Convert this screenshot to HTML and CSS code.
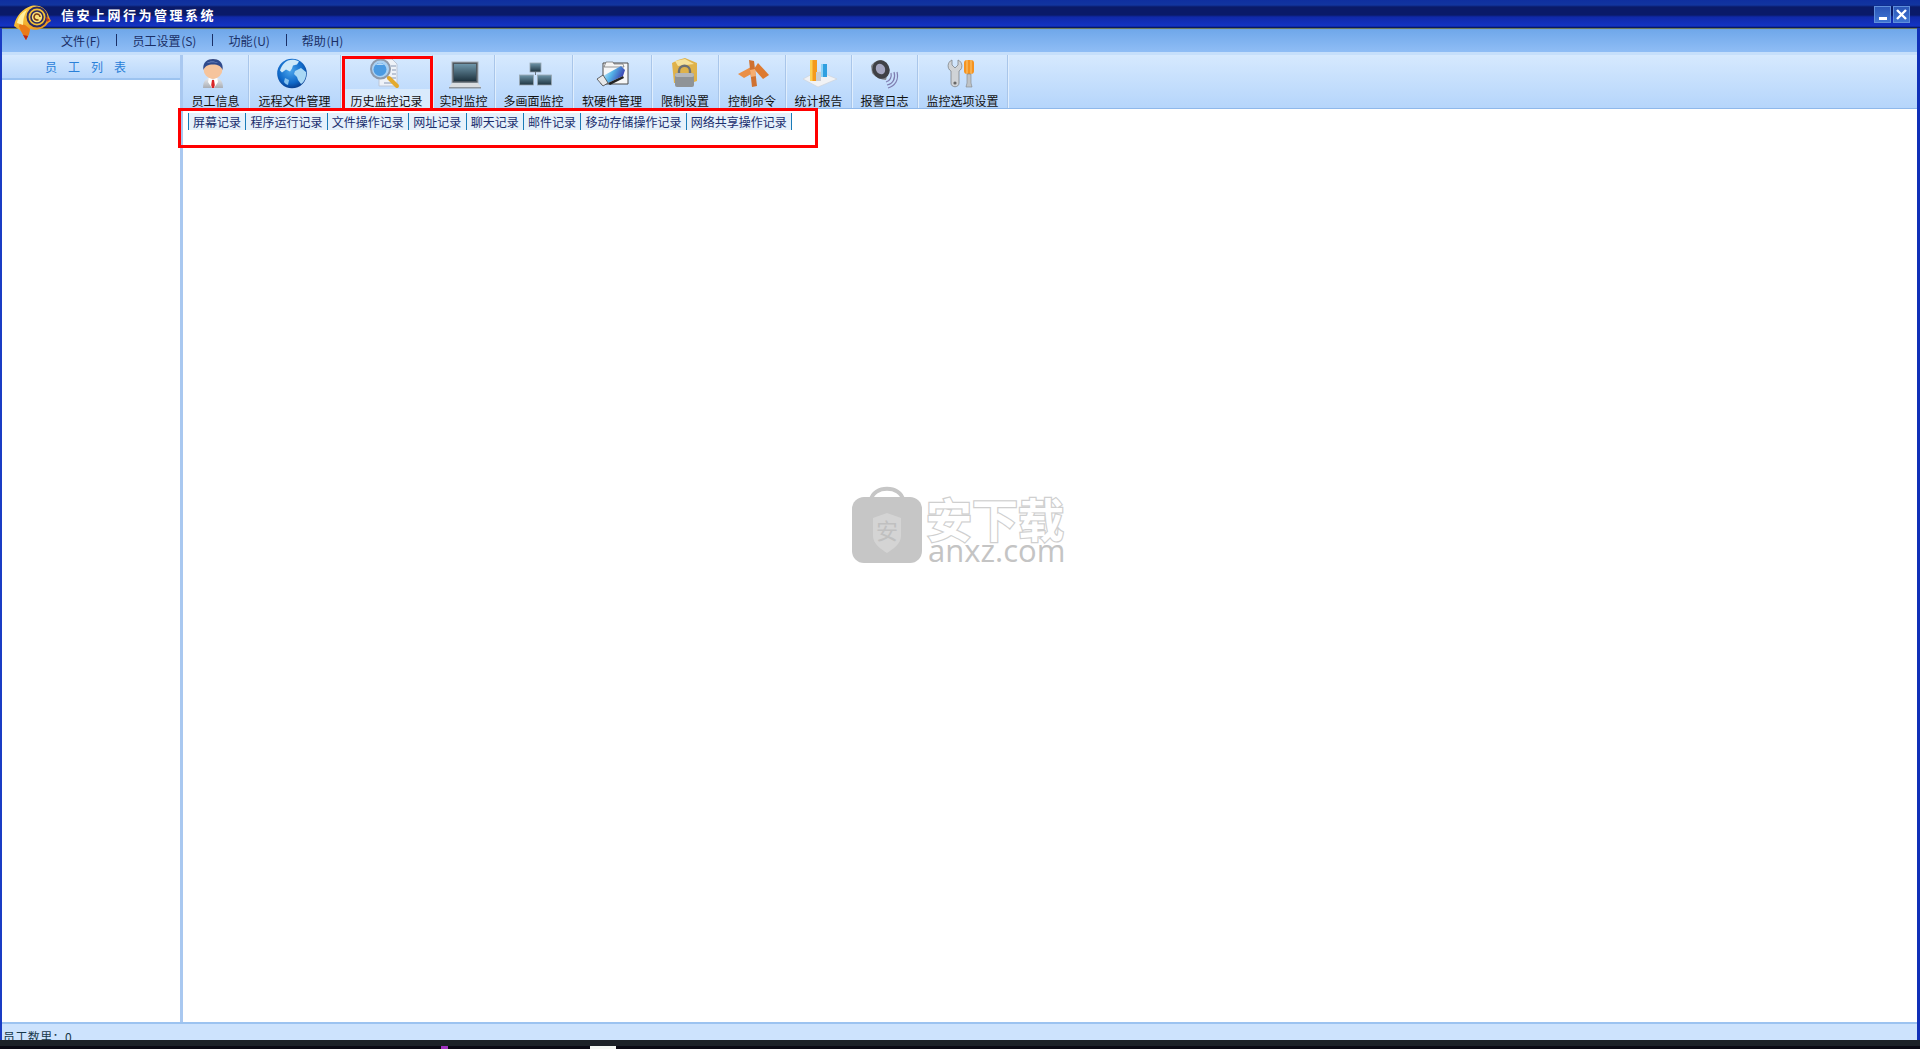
FILE: index.html
```html
<!DOCTYPE html>
<html lang="zh-CN">
    <head>
        <meta charset="UTF-8" />
        <title>信安上网行为管理系统</title>
        <link rel="stylesheet" href="styles.css">
    </head>
    <body>
        <header class="titlebar">
            <span class="app-title">信安上网行为管理系统</span>
            <div class="window-buttons">
                <button class="window-button"><span class="minimize-mark"></span></button>
                <button class="window-button">
                    <svg width="11" height="11" viewBox="0 0 11 11"><path d="M1 1l9 9M10 1l-9 9" stroke="#fff" stroke-width="2.4" fill="none"/></svg>
                </button>
            </div>
        </header>

        <svg class="app-logo" width="40" height="38" viewBox="0 0 40 38">
            <defs>
                <linearGradient id="logoGold" x1="0" y1="0" x2="0.6" y2="1">
                    <stop offset="0" stop-color="#ffd94e"/>
                    <stop offset="1" stop-color="#e58a14"/>
                </linearGradient>
            </defs>
            <path d="M2 22C4 11 11 5 19 2c9-2 16 3 18 11l2 4-3 2c-4 6-11 8-18 6l-1 5-3 6-5-9z" fill="url(#logoGold)"/>
            <path d="M8 20l5 1 5 4-1 5-3 6-5-9-2-5z" fill="#ea7a18"/>
            <path d="M11 31l3 5 2-4z" fill="#b8261a"/>
            <path d="M5 19C6 13 10 8 15 6c-3 5-4 10-4 15z" fill="#fff0a0"/>
            <circle cx="25" cy="13" r="9.500" fill="#f4c234" stroke="#2c2a62" stroke-width="2"/>
            <circle cx="25" cy="13" r="6" fill="#f9e07a" stroke="#2c2a62" stroke-width="1.600"/>
            <path d="M28 13a3 3 0 1 0-1.500 2.600" fill="none" stroke="#7a3a10" stroke-width="1.500"/>
            <path d="M34 13l4 3-3 2z" fill="#c8381a"/>
        </svg>

        <div class="frame">
            <nav class="menubar">
                <span class="menu-item">文件 (F)</span>
                <span class="menu-sep"></span>
                <span class="menu-item">员工设置 (S)</span>
                <span class="menu-sep"></span>
                <span class="menu-item">功能 (U)</span>
                <span class="menu-sep"></span>
                <span class="menu-item">帮助 (H)</span>
            </nav>

            <div class="workspace">
                <aside class="sidebar">
                    <div class="sidebar-head">员 工 列 表</div>
                </aside>

                <main class="content">
                    <div class="toolbar">
                        <div class="tool w-66">
                            <svg class="tool-icon" viewBox="0 0 36 34">
                                <defs>
                                    <linearGradient id="userCoat" x1="0" y1="0" x2="0" y2="1">
                                        <stop offset="0" stop-color="#eef0f3"/>
                                        <stop offset="1" stop-color="#a9adb4"/>
                                    </linearGradient>
                                </defs>
                                <path d="M5 31c0-7 3-11 10-11s10 4 10 11z" fill="url(#userCoat)"/>
                                <path d="M11 20l4 3 4-3 1 5-4 6h-2l-4-6z" fill="#fff"/>
                                <path d="M14 23h2l.800 5-.800 3h-2l-.800-3z" fill="#d8262a"/>
                                <ellipse cx="15" cy="12" rx="9.500" ry="10" fill="#f6c49c"/>
                                <path d="M5.500 13C4 5 10 2 15 2s11 3 9.500 11C23 9 20 7.500 15 7.500S7 9 5.500 13z" fill="#2f4a8c"/>
                                <path d="M9 6c2-2 8-2 11 0-3-1-8-1-11 0z" fill="#7d95cc"/>
                            </svg>
                            <span class="tool-label">员工信息</span>
                        </div>
                        <div class="tool w-92">
                            <svg class="tool-icon" viewBox="0 0 36 34">
                                <defs>
                                    <radialGradient id="globeFill" cx="0.45" cy="0.4" r="0.65">
                                        <stop offset="0" stop-color="#4ba6ec"/>
                                        <stop offset="0.65" stop-color="#0f68c8"/>
                                        <stop offset="1" stop-color="#063582"/>
                                    </radialGradient>
                                </defs>
                                <circle cx="15" cy="16.500" r="14.800" fill="url(#globeFill)"/>
                                <path d="M11 3.500c3-1 8-1 11 1l-2 3-4 1-1 3-2 3-4-2-4 3-2-2C4 10 7 5 11 3.500z" fill="#cfe9fa"/>
                                <path d="M18 14l6-3 5 4c.500 6-2 10-5 12l-3-4-1-3-3-3z" fill="#a9d8f5"/>
                                <path d="M8 21l4 2-1 5c-1.500-.500-3-1.500-4-3z" fill="#86c2ee"/>
                            </svg>
                            <span class="tool-label">远程文件管理</span>
                        </div>
                        <div class="tool w-92 tool-active">
                            <svg class="tool-icon" viewBox="0 0 36 34">
                                <path d="M10 2h13l5 5v22H10z" fill="#eef2f8" stroke="#bcc6d6"/>
                                <path d="M22 9h5M23 13h4M23 17h4M22 21h5M15 26h12" stroke="#aab6ca" stroke-width="1.400"/>
                                <circle cx="11.500" cy="12" r="9.500" fill="#a9d1f4" stroke="#8d99ab" stroke-width="2"/>
                                <circle cx="11" cy="12.500" r="6.500" fill="#4a9ae2"/>
                                <path d="M7 8c2-2 6-2 8 0-2-.500-6-.500-8 0z" fill="#e0f0fc"/>
                                <path d="M18.500 20l9.500 9.500" stroke="#8d7a3a" stroke-width="1.800"/>
                                <path d="M20 21l8 8" stroke="#e3aa2e" stroke-width="4" stroke-linecap="round"/>
                            </svg>
                            <span class="tool-label">历史监控记录</span>
                        </div>
                        <div class="tool w-62">
                            <svg class="tool-icon" viewBox="0 0 36 34">
                                <defs>
                                    <linearGradient id="screenFill" x1="0" y1="0" x2="0" y2="1">
                                        <stop offset="0" stop-color="#6f96aa"/>
                                        <stop offset="1" stop-color="#1f3440"/>
                                    </linearGradient>
                                </defs>
                                <rect x="6" y="5" width="26" height="21" fill="#4e5860" stroke="#a5acb3"/>
                                <rect x="8" y="7" width="22" height="17" fill="url(#screenFill)"/>
                                <path d="M6 26h26l3 4H3z" fill="#dadde0"/>
                                <path d="M3 30h32v1.500H3z" fill="#8d949b"/>
                            </svg>
                            <span class="tool-label">实时监控</span>
                        </div>
                        <div class="tool w-78">
                            <svg class="tool-icon" viewBox="0 0 36 34">
                                <rect x="14" y="6" width="11" height="9" fill="url(#screenFill)" stroke="#9ba8b2" stroke-width="0.800"/>
                                <rect x="3.500" y="18" width="14" height="10" fill="url(#screenFill)" stroke="#9ba8b2" stroke-width="0.800"/>
                                <rect x="21.500" y="18" width="14" height="10" fill="url(#screenFill)" stroke="#9ba8b2" stroke-width="0.800"/>
                                <path d="M19.500 15v3" stroke="#6a7680"/>
                            </svg>
                            <span class="tool-label">多画面监控</span>
                        </div>
                        <div class="tool w-79">
                            <svg class="tool-icon" viewBox="0 0 36 34">
                                <defs>
                                    <linearGradient id="usbFill" x1="0" y1="0" x2="1" y2="0.400">
                                        <stop offset="0" stop-color="#e8f4fc"/>
                                        <stop offset="0.5" stop-color="#55b4e8"/>
                                        <stop offset="1" stop-color="#3a3fb0"/>
                                    </linearGradient>
                                </defs>
                                <path d="M9 6h25v21H7l2-7z" fill="#f6f7f8" stroke="#4a4a4a"/>
                                <path d="M12 5h7l1 2h9l1 3H10z" fill="#f4f4f4" stroke="#555" stroke-width="0.600"/>
                                <path d="M9 19L27 9l4 4-2 6-15 7z" fill="url(#usbFill)"/>
                                <path d="M14 26l15-7 1 2-14 7z" fill="#222"/>
                                <path d="M3 22l6-4 5 8-5 3z" fill="#e6e8ea" stroke="#444" stroke-width="0.800"/>
                            </svg>
                            <span class="tool-label">软硬件管理</span>
                        </div>
                        <div class="tool w-67">
                            <svg class="tool-icon" viewBox="0 0 36 34">
                                <path d="M5 6l6-3 7-2 12 5v18l-6 2H7z" fill="#dfb24a"/>
                                <path d="M8 4l10-2 9 5-16 2z" fill="#f6e29c"/>
                                <path d="M12 17v-3c0-7 11-7 11 0v3" fill="none" stroke="#6c7074" stroke-width="2.400"/>
                                <rect x="8" y="16" width="19" height="14" rx="2" fill="#8f9396"/>
                                <rect x="8" y="16" width="19" height="4" rx="2" fill="#b4b7ba"/>
                            </svg>
                            <span class="tool-label">限制设置</span>
                        </div>
                        <div class="tool w-67">
                            <svg class="tool-icon" viewBox="0 0 36 34">
                                <path d="M4 17l13-7 2 6-9 5z" fill="#ea8f46"/>
                                <path d="M35 18L24 6l-4 6 9 10z" fill="#dd7a30"/>
                                <path d="M15 3l5 1 3 25-5 1z" fill="#cf7130"/>
                                <path d="M16 13l5-1 1 7-5 1z" fill="#f5ad70"/>
                            </svg>
                            <span class="tool-label">控制命令</span>
                        </div>
                        <div class="tool w-66">
                            <svg class="tool-icon" viewBox="2 0 36 34">
                                <path d="M4 22l15-8 19 8-19 8z" fill="#f1f2f5" stroke="#cfd3da" stroke-width="0.700"/>
                                <path d="M11 3h7v21h-7z" fill="#f59a1c"/>
                                <path d="M11 3h2.500v21H11z" fill="#fcd050"/>
                                <path d="M22 7h6v13h-6z" fill="#2f9fe0"/>
                                <path d="M22 7h2v13h-2z" fill="#8dd3f7"/>
                                <path d="M17 15h5v9h-5z" fill="#c8ccd4"/>
                            </svg>
                            <span class="tool-label">统计报告</span>
                        </div>
                        <div class="tool w-66">
                            <svg class="tool-icon" viewBox="0 0 36 34">
                                <path d="M4 9c2-4 7-6 11-6 5 6 6 14 4 20-5 0-11-3-14-7z" fill="#85898f"/>
                                <ellipse cx="14" cy="12.500" rx="8.500" ry="9.500" fill="#3f4146" transform="rotate(-25 14 12.500)"/>
                                <ellipse cx="13.500" cy="12" rx="4.500" ry="5.500" fill="#a4a6c0" transform="rotate(-25 13.500 12)"/>
                                <path d="M24 16c1 4-1 8-5 9M27 15c2 6-1 12-7 13M30 15c2 8-2 14-9 16" fill="none" stroke="#7f7db0" stroke-width="1.200"/>
                            </svg>
                            <span class="tool-label">报警日志</span>
                        </div>
                        <div class="tool w-90">
                            <svg class="tool-icon" viewBox="0 0 36 34">
                                <path d="M7 3v5l3 3 3-3V3c5 2 5 9 1 11v12c0 5-8 5-8 0V14C2 12 2 5 7 3z" fill="#d0d3d6" stroke="#7f8488" stroke-width="0.800"/>
                                <circle cx="10" cy="26" r="1.600" fill="#666"/>
                                <rect x="19" y="3" width="10" height="14" rx="3" fill="#f59320"/>
                                <path d="M22 3v14M26 3v14" stroke="#fbc069" stroke-width="1.200"/>
                                <path d="M22 17h4v9l1 4h-6l1-4z" fill="#bfc3c6" stroke="#7f8488" stroke-width="0.600"/>
                            </svg>
                            <span class="tool-label">监控选项设置</span>
                        </div>
                    </div>

                    <div class="subtabs">
                        <a class="subtab">屏幕记录</a>
                        <a class="subtab">程序运行记录</a>
                        <a class="subtab">文件操作记录</a>
                        <a class="subtab">网址记录</a>
                        <a class="subtab">聊天记录</a>
                        <a class="subtab">邮件记录</a>
                        <a class="subtab">移动存储操作记录</a>
                        <a class="subtab">网络共享操作记录</a>
                    </div>

                    <div class="watermark">
                        <svg width="70" height="80" viewBox="0 0 70 80">
                            <path d="M19 17C21 2 49 2 51 17" fill="none" stroke="#c6c6c6" stroke-width="4"/>
                            <rect x="0" y="14" width="70" height="66" rx="12" fill="#c6c6c6"/>
                            <path d="M21 35l14-5 14 5v18c0 8-8 13-14 17-6-4-14-9-14-17z" fill="#d4d4d4"/>
                            <text x="35" y="56" class="watermark-seal">安</text>
                        </svg>
                        <div class="watermark-text">
                            <span class="watermark-cn">安下载</span>
                            <span class="watermark-en">anxz.com</span>
                        </div>
                    </div>
                </main>
            </div>

            <footer class="statusbar">员工数里：0</footer>
        </div>

        <div class="taskbar">
            <div class="taskbar-strip">
                <span class="task-purple"></span>
                <span class="task-white"></span>
                <span class="task-clock">17:40</span>
            </div>
        </div>

        <div class="mark mark-tool"></div>
        <div class="mark mark-tabs"></div>
    </body>
</html>
```

FILE: styles.css
```css
* {
    box-sizing: border-box;
}
body {
    position: relative;
    display: flex;
    flex-direction: column;
    width: 1920px;
    height: 1049px;
    margin: 0;
    overflow: hidden;
    background: #fff;
    font-family: "Noto Sans CJK SC", "Liberation Sans", sans-serif;
    font-size: 12px;
}

.titlebar {
    display: flex;
    align-items: center;
    justify-content: space-between;
    height: 28px;
    padding: 0 10px 0 61px;
    background: linear-gradient(#0f2f9f 0, #12359f 5px, #0a1a68 7px, #0a1a68 15px, #1029a8 17px, #1334c4 26px, #04104a 28px);
}
.app-title {
    color: #fff;
    font-size: 13px;
    font-weight: bold;
    letter-spacing: 2.5px;
}
.window-buttons {
    display: flex;
    gap: 2px;
}
.window-button {
    display: flex;
    align-items: center;
    justify-content: center;
    width: 17px;
    height: 17px;
    padding: 0;
    border: 1px solid #5f8fdc;
    background: linear-gradient(#2a55b8, #3f76d2);
}
.minimize-mark {
    width: 8px;
    height: 3px;
    margin-top: 8px;
    background: #fff;
}
.app-logo {
    position: absolute;
    left: 12px;
    top: 4px;
}

.frame {
    display: flex;
    flex-direction: column;
    height: 1012px;
    border-left: 2px solid #1a3cc4;
    border-right: 3px solid #1030b8;
}
.menubar {
    display: flex;
    align-items: center;
    height: 27px;
    padding: 0 0 1px 59px;
    border-top: 1px solid #6b7a58;
    border-bottom: 3px solid #c6dffb;
    background: linear-gradient(#6fa7ea, #8fbdf5);
    color: #1a2f66;
    font-size: 12px;
}
.menu-item {
    white-space: nowrap;
    word-spacing: -2px;
}
.menu-sep {
    width: 1px;
    height: 12px;
    margin: 0 15px 0 16px;
    background: #1a2f66;
}

.workspace {
    display: flex;
    flex: 1;
    min-height: 0;
}
.sidebar {
    width: 178px;
    background: #fff;
}
.sidebar-head {
    height: 25px;
    padding: 3px 8px 0 0;
    border-bottom: 2px solid #9cc3f0;
    background: linear-gradient(#d6e9fe, #b9d7fb);
    color: #2a80d8;
    font-size: 12px;
    text-align: center;
    word-spacing: 2.3px;
    letter-spacing: 3px;
    white-space: pre;
}
.content {
    position: relative;
    flex: 1;
    border-left: 3px solid #a9c8f0;
    background: #fff;
}

.toolbar {
    display: flex;
    height: 54px;
    border-bottom: 1px solid #8fb8ea;
    background: linear-gradient(#d6e9fe, #b5d5fb);
}
.tool {
    display: flex;
    flex-direction: column;
    align-items: center;
    border-right: 1px solid #a9c6ea;
    box-shadow: 1px 0 0 #e0eefd;
    color: #111;
}
.w-62 { width: 62px; }
.w-66 { width: 66px; }
.w-67 { width: 67px; }
.w-78 { width: 78px; }
.w-79 { width: 79px; }
.w-90 { width: 90px; }
.w-92 { width: 92px; }
.tool-icon {
    flex: none;
    width: 36px;
    height: 34px;
    margin-top: 2px;
}
.tool-label {
    margin-top: 2px;
    line-height: 15px;
    white-space: nowrap;
}
.tool-active {
    background: linear-gradient(transparent 34px, #d9eafc 34px);
}

.subtabs {
    display: flex;
    height: 22px;
    padding: 4px 0 0 5px;
}
.subtab {
    height: 17px;
    padding: 0 4.4px 0 4px;
    border-left: 1px solid #1a7bb8;
    background: #e6f1fb;
    color: #1a2f6e;
    font-size: 12px;
    line-height: 17px;
    white-space: nowrap;
}
.subtab:last-child {
    border-right: 1px solid #1a7bb8;
}

.watermark {
    position: absolute;
    left: 669px;
    top: 428px;
    display: flex;
    gap: 4px;
}
.watermark-seal {
    fill: #c0c0c0;
    font-size: 22px;
    text-anchor: middle;
}
.watermark-text {
    display: flex;
    flex-direction: column;
    padding-top: 13px;
}
.watermark-cn {
    height: 42px;
    color: #fff;
    font-size: 46px;
    font-weight: bold;
    line-height: 42px;
    -webkit-text-stroke: 2.5px #cfcfcf;
    paint-order: stroke fill;
}
.watermark-en {
    margin-left: 2px;
    color: #c4c4c4;
    font-family: "Open Sans", sans-serif;
    font-size: 31px;
    line-height: 24px;
}

.statusbar {
    flex: none;
    height: 18px;
    padding: 5px 0 0 1px;
    overflow: hidden;
    border-top: 2px solid #9cc3f0;
    background: #cde3fd;
    color: #16384a;
    font-size: 12px;
    line-height: 16px;
    letter-spacing: 0.4px;
}

.taskbar {
    flex: none;
    height: 9px;
    overflow: hidden;
    border-top: 6px solid #1c2228;
    background: #0a0a14;
}
.taskbar-strip {
    display: flex;
    height: 3px;
    overflow: hidden;
    padding-left: 441px;
}
.task-purple {
    width: 7px;
    background: #a030c0;
}
.task-white {
    width: 26px;
    margin-left: 142px;
    background: #f4f8f4;
}
.task-clock {
    margin-left: 1247px;
    color: #fff;
    font-family: "Liberation Sans", sans-serif;
    font-size: 13px;
    line-height: 15px;
}

.mark {
    position: absolute;
    border: 3px solid #f00;
}
.mark-tool {
    left: 342px;
    top: 56px;
    width: 91px;
    height: 55px;
}
.mark-tabs {
    left: 178px;
    top: 108px;
    width: 640px;
    height: 40px;
}
```
